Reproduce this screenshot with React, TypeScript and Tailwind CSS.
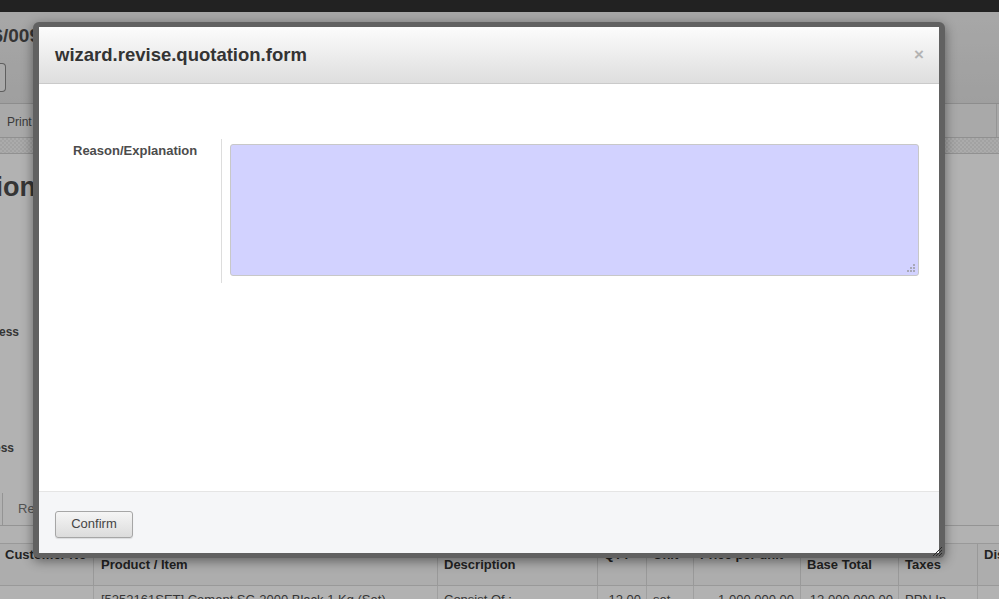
import React from 'react'

const font = { fontFamily: '"Liberation Sans", Arial, Helvetica, sans-serif' }

function Background() {
  return (
    <div className="flex flex-col w-full h-full bg-white text-[#4c4c4c]" style={font}>
      <div className="h-[12px] bg-[#303030] shrink-0" />
      <div className="h-[92px] shrink-0 bg-gradient-to-b from-[#f0f0f0] to-[#e4e4e4] border-b border-[#cacaca] flex flex-col">
        <div className="w-[40px] overflow-hidden flex justify-end mt-[10px]">
          <span className="text-[19px] font-bold whitespace-nowrap text-[#4c4c4c]">SO/2016/009</span>
        </div>
        <div className="mt-[12px] w-[6px] h-[29px] border border-[#888] rounded-r-[4px] bg-[#f4f4f4] border-l-0" />
      </div>
      <div className="h-[34px] shrink-0 bg-[#f2f2f2] border-b border-[#cfcfcf] flex">
        <div className="flex items-center pl-[7px] pr-[14px] pt-[2px] border-r border-[#d6d6d6] text-[12px] text-[#555]">Print Quotation</div>
        <div className="flex-1" />
        <div className="w-[3px] border-l border-[#d6d6d6]" />
      </div>
      <div className="h-[16px] shrink-0 bg-[repeating-conic-gradient(#e9e9e9_0_25%,#f5f5f5_0_50%)] bg-[length:4px_4px] border-b border-[#d0d0d0]" />
      <div className="h-[389px] shrink-0 overflow-hidden flex flex-col">
        <div className="mt-[13px] w-[36px] overflow-hidden flex justify-end leading-[40px]">
          <span className="text-[27px] font-bold whitespace-nowrap text-[#4c4c4c]">Quotation</span>
        </div>
        <div className="mt-[116px] w-[19px] overflow-hidden flex justify-end leading-[18px]">
          <span className="text-[12px] font-bold whitespace-nowrap">Address</span>
        </div>
        <div className="mt-[98px] w-[14px] overflow-hidden flex justify-end leading-[18px]">
          <span className="text-[12px] font-bold whitespace-nowrap">Address</span>
        </div>
        <div className="mt-[36px] border-b border-[#d4d4d4] flex h-[33px]">
          <div className="w-[3px] border-r border-[#d4d4d4]" />
          <div className="flex items-center pl-[15px] pr-[16px] text-[13px] text-[#777]">Revisions</div>
        </div>
      </div>
      <div className="shrink-0 flex flex-col text-[13px]">
        <div className="h-[43px] flex bg-[#f8f8f8] border-t border-b border-[#dcdcdc] font-bold text-[#333] leading-[15px]">
          <div className="w-[94px] shrink-0 border-r border-[#dcdcdc] pl-[5px] pt-[3px]">Customer No</div>
          <div className="w-[344px] shrink-0 border-r border-[#dcdcdc] pl-[7px] pt-[13px]">Product / Item</div>
          <div className="w-[160px] shrink-0 border-r border-[#dcdcdc] pl-[6px] pt-[13px]">Description</div>
          <div className="w-[49px] shrink-0 border-r border-[#dcdcdc] pl-[6px] pt-[3px]">QTY</div>
          <div className="w-[47px] shrink-0 border-r border-[#dcdcdc] pl-[6px] pt-[3px]">Unit</div>
          <div className="w-[107px] shrink-0 border-r border-[#dcdcdc] pl-[6px] pt-[3px]">Price per unit</div>
          <div className="w-[98px] shrink-0 border-r border-[#dcdcdc] pl-[6px] pt-[13px]">Base Total</div>
          <div className="w-[79px] shrink-0 border-r border-[#dcdcdc] pl-[6px] pt-[13px]">Taxes</div>
          <div className="flex-1 min-w-0 overflow-hidden whitespace-nowrap pl-[6px] pt-[3px]">Disc</div>
        </div>
        <div className="h-[20px] flex text-[#4c4c4c]">
          <div className="w-[94px] shrink-0 border-r border-[#e4e4e4]" />
          <div className="w-[344px] shrink-0 border-r border-[#e4e4e4] pl-[7px] pt-[4px] whitespace-nowrap">[5252161SET] Cement SC-2000 Black 1 Kg (Set)</div>
          <div className="w-[160px] shrink-0 border-r border-[#e4e4e4] pl-[6px] pt-[4px]">Consist Of :</div>
          <div className="w-[49px] shrink-0 border-r border-[#e4e4e4] pr-[5px] pt-[4px] text-right">12.00</div>
          <div className="w-[47px] shrink-0 border-r border-[#e4e4e4] pl-[6px] pt-[4px]">set</div>
          <div className="w-[107px] shrink-0 border-r border-[#e4e4e4] pr-[6px] pt-[4px] text-right">1,000,000.00</div>
          <div className="w-[98px] shrink-0 border-r border-[#e4e4e4] pr-[5px] pt-[4px] text-right">12,000,000.00</div>
          <div className="w-[79px] shrink-0 border-r border-[#e4e4e4] pl-[6px] pt-[4px] whitespace-nowrap">PPN In -</div>
          <div className="flex-1 min-w-0" />
        </div>
      </div>
    </div>
  )
}

function Grip() {
  return (
    <svg width="10" height="10" viewBox="0 0 10 10" className="absolute right-[2px] bottom-[2px]">
      {[
        [7, 1], [4, 4], [7, 4], [1, 7], [4, 7], [7, 7],
      ].map(([x, y], i) => (
        <rect key={i} x={x} y={y} width="2" height="2" fill="#a8a8b8" />
      ))}
    </svg>
  )
}

export default function App() {
  return (
    <div className="relative w-[999px] h-[599px] overflow-hidden">
      <Background />
      <div className="absolute inset-0 top-[12px] bg-black/30" />
      <div className="absolute left-0 right-0 top-0 h-[12px] bg-[#222]" />

      <div
        className="absolute left-[33px] top-[22px] w-[912px] h-[536px] bg-[#616161] rounded-[6px] pt-[5px] pb-[5px] pl-[6px] pr-[6px] shadow-[0_3px_12px_rgba(0,0,0,0.45)]"
        style={font}
      >
        <div className="w-full h-full bg-white flex flex-col">
          <div className="h-[57px] shrink-0 bg-gradient-to-b from-[#fcfcfc] to-[#dedede] border-b border-[#cacaca] flex items-center justify-between pl-[16px] pr-[15px]">
            <h2 className="text-[18.5px] font-bold text-[#333] leading-none mt-[1px]">wizard.revise.quotation.form</h2>
            <span className="text-[17px] font-bold text-[#b3b3b3] leading-none -mt-[2px]">×</span>
          </div>

          <div className="flex-1 pt-[55px] pl-[34px] pr-[20px]">
            <div className="flex">
              <div className="w-[148px] pt-[2px] text-[13px] font-bold text-[#4c4c4c]">Reason/Explanation</div>
              <div className="flex-1 border-l border-[#dddddd] pl-[8px] pt-[5px] pb-[7px]">
                <div className="relative h-[132px] bg-[#d2d2ff] border border-[#c8c8c8] rounded-[3px]">
                  <Grip />
                </div>
              </div>
            </div>
          </div>

          <div className="h-[62px] shrink-0 bg-[#f5f6f8] border-t border-[#e5e5e5] flex items-center pl-[16px] pt-[3px]">
            <button className="w-[78px] h-[27px] rounded-[3px] border border-[#a6a6a6] bg-gradient-to-b from-[#f5f5f5] to-[#dcdcdc] text-[13px] text-[#444] shadow-[0_1px_1px_rgba(0,0,0,0.1)]">
              Confirm
            </button>
          </div>
        </div>
        <svg width="12" height="12" viewBox="0 0 12 12" className="absolute right-[2px] bottom-[1px]">
          <path d="M11 2 L2 11 M11 5 L5 11 M11 8 L8 11" stroke="#2a2a2a" strokeWidth="1" />
        </svg>
      </div>
    </div>
  )
}
